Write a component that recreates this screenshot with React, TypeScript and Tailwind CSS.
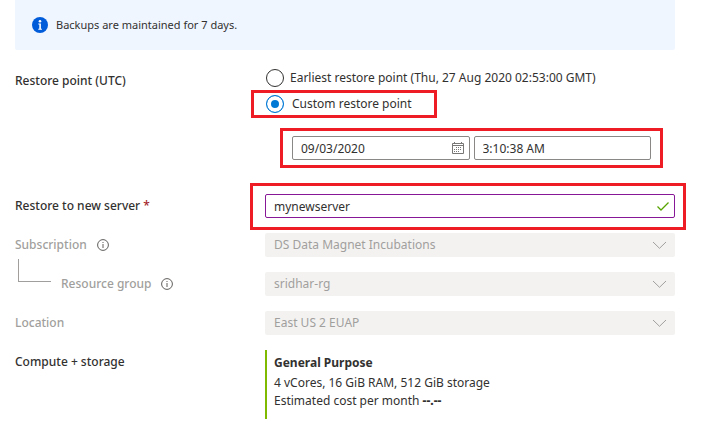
import type { ReactNode } from "react";

function InfoIcon() {
  return (
    <svg className="size-3 shrink-0" viewBox="0 0 12 12" fill="none" stroke="#605e5c" aria-hidden="true">
      <circle cx="6" cy="6" r="5.4" />
      <path d="M6 5v4" />
      <path d="M6 3v1" />
    </svg>
  );
}

function Highlight({ className }: { className: string }) {
  return <span aria-hidden="true" className={`pointer-events-none absolute border-[3px] border-[#ee1c25] ${className}`} />;
}

function Row({ label, children }: { label: ReactNode; children: ReactNode }) {
  return (
    <div className="grid grid-cols-[250px_minmax(0,1fr)] items-start">
      <div className="flex h-6 items-center">{label}</div>
      {children}
    </div>
  );
}

function DisabledSelect({ id, value }: { id: string; value: string }) {
  return (
    <div className="relative">
      <select
        id={id}
        disabled
        className="block h-6 w-full appearance-none rounded-xs bg-[#f3f2f1] px-[9px] text-[#a19f9d] opacity-100"
      >
        <option>{value}</option>
      </select>
      <svg
        className="pointer-events-none absolute top-2 right-2 h-2 w-[15px]"
        viewBox="0 0 15 8"
        fill="none"
        stroke="#a19f9d"
        aria-hidden="true"
      >
        <path d="M1 1l6.5 6.3L14 1" />
      </svg>
    </div>
  );
}

const radio =
  "size-[18px] shrink-0 appearance-none rounded-full border border-[#323130] checked:border-[#0078d4] checked:bg-[#0078d4] checked:shadow-[inset_0_0_0_4px_white]";
const labelText = "font-medium";
const mutedLabel = "font-medium text-[#a19f9d]";

export default function App() {
  return (
    <main className="bg-white pr-[34px] pl-[15px] font-['Noto_Sans',sans-serif] text-[12px] leading-[18px] text-[#323130]">
      <div className="flex h-[50px] items-center gap-2 rounded-b-xs bg-[#f0f6ff] px-[17px] text-[11px]">
        <svg className="size-4 shrink-0" viewBox="0 0 16 16" aria-hidden="true">
          <circle cx="8" cy="8" r="8" fill="#015cda" />
          <circle cx="8" cy="4.2" r="1.3" fill="white" />
          <path d="M6.3 6.5h2.6v5.2h1v1H6.3v-1h1V7.5h-1z" fill="white" />
        </svg>
        <span>Backups are maintained for 7 days.</span>
      </div>

      <form className="flex flex-col gap-[15px] pt-[19px]">
        <fieldset className="mb-[19px]" aria-label="Restore point (UTC)">
          <Row label={<span className={labelText}>Restore point (UTC)</span>}>
            <div>
              <label className="flex h-[18px] items-center gap-[6px] pl-px">
                <input type="radio" name="restore" className={radio} />
                Earliest restore point (Thu, 27 Aug 2020 02:53:00 GMT)
              </label>
              <div className="relative mt-2">
                <label className="flex h-[18px] items-center gap-2 pl-px">
                  <input type="radio" name="restore" defaultChecked className={radio} />
                  Custom restore point
                </label>
                <Highlight className="-top-[5px] -bottom-[5px] -left-[14px] w-[186px]" />
              </div>
              <div className="relative mt-[23px] mr-6 ml-[27px] grid grid-cols-2 gap-1">
                <div className="relative">
                  <input
                    aria-label="Restore date"
                    defaultValue="09/03/2020"
                    className="block h-6 w-full rounded-xs border border-[#8a8886] px-2"
                  />
                  <svg
                    className="pointer-events-none absolute top-[6px] right-[6px] size-3"
                    viewBox="0 0 12 12"
                    fill="none"
                    stroke="#797775"
                    aria-hidden="true"
                  >
                    <path d="M.5 1.5h11v10H.5zM.5 3.5h11M2.5 0v2M9.5 0v2" />
                    <path d="M4 5.5h6M2 7.5h8M2 9.5h6" strokeDasharray="1 1" />
                  </svg>
                </div>
                <input
                  aria-label="Restore time"
                  defaultValue="3:10:38 AM"
                  className="block h-6 w-full rounded-xs border border-[#8a8886] px-2"
                />
                <Highlight className="-inset-x-3 -inset-y-2" />
              </div>
            </div>
          </Row>
        </fieldset>

        <Row
          label={
            <label htmlFor="server" className={labelText}>
              Restore to new server <span className="text-[#a4262c]">*</span>
            </label>
          }
        >
          <div className="relative">
            <input
              id="server"
              defaultValue="mynewserver"
              className="block h-6 w-full rounded-xs border border-[#881798] px-2"
            />
            <svg
              className="pointer-events-none absolute top-2 right-[6px] h-[9px] w-3"
              viewBox="0 0 12 9"
              fill="none"
              stroke="#57a300"
              strokeWidth="1.3"
              aria-hidden="true"
            >
              <path d="M.5 4.5L4 8L11.500 .5" />
            </svg>
            <Highlight className="-top-[11px] -right-[11px] -bottom-3 -left-[15px]" />
          </div>
        </Row>

        <Row
          label={
            <div className="flex items-center gap-[10px]">
              <label htmlFor="subscription" className={mutedLabel}>Subscription</label>
              <InfoIcon />
            </div>
          }
        >
          <DisabledSelect id="subscription" value="DS Data Magnet Incubations" />
        </Row>

        <Row
          label={
            <div className="flex items-center gap-[10px] pl-[3px]">
              <span aria-hidden="true" className="-mt-7 h-[23px] w-[33px] border-b border-l border-[#a19f9d]" />
              <label htmlFor="group" className={mutedLabel}>Resource group</label>
              <InfoIcon />
            </div>
          }
        >
          <DisabledSelect id="group" value="sridhar-rg" />
        </Row>

        <Row label={<label htmlFor="location" className={mutedLabel}>Location</label>}>
          <DisabledSelect id="location" value="East US 2 EUAP" />
        </Row>

        <Row label={<span className={labelText}>Compute + storage</span>}>
          <div className="border-l-2 border-[#7fba00] pt-1 pb-[9px] pl-[7px]">
            <p className="mb-[2px] font-bold">General Purpose</p>
            <p>4 vCores, 16 GiB RAM, 512 GiB storage</p>
            <p>
              Estimated cost per month <b className="font-extrabold">--.--</b>
            </p>
          </div>
        </Row>
      </form>
    </main>
  );
}
